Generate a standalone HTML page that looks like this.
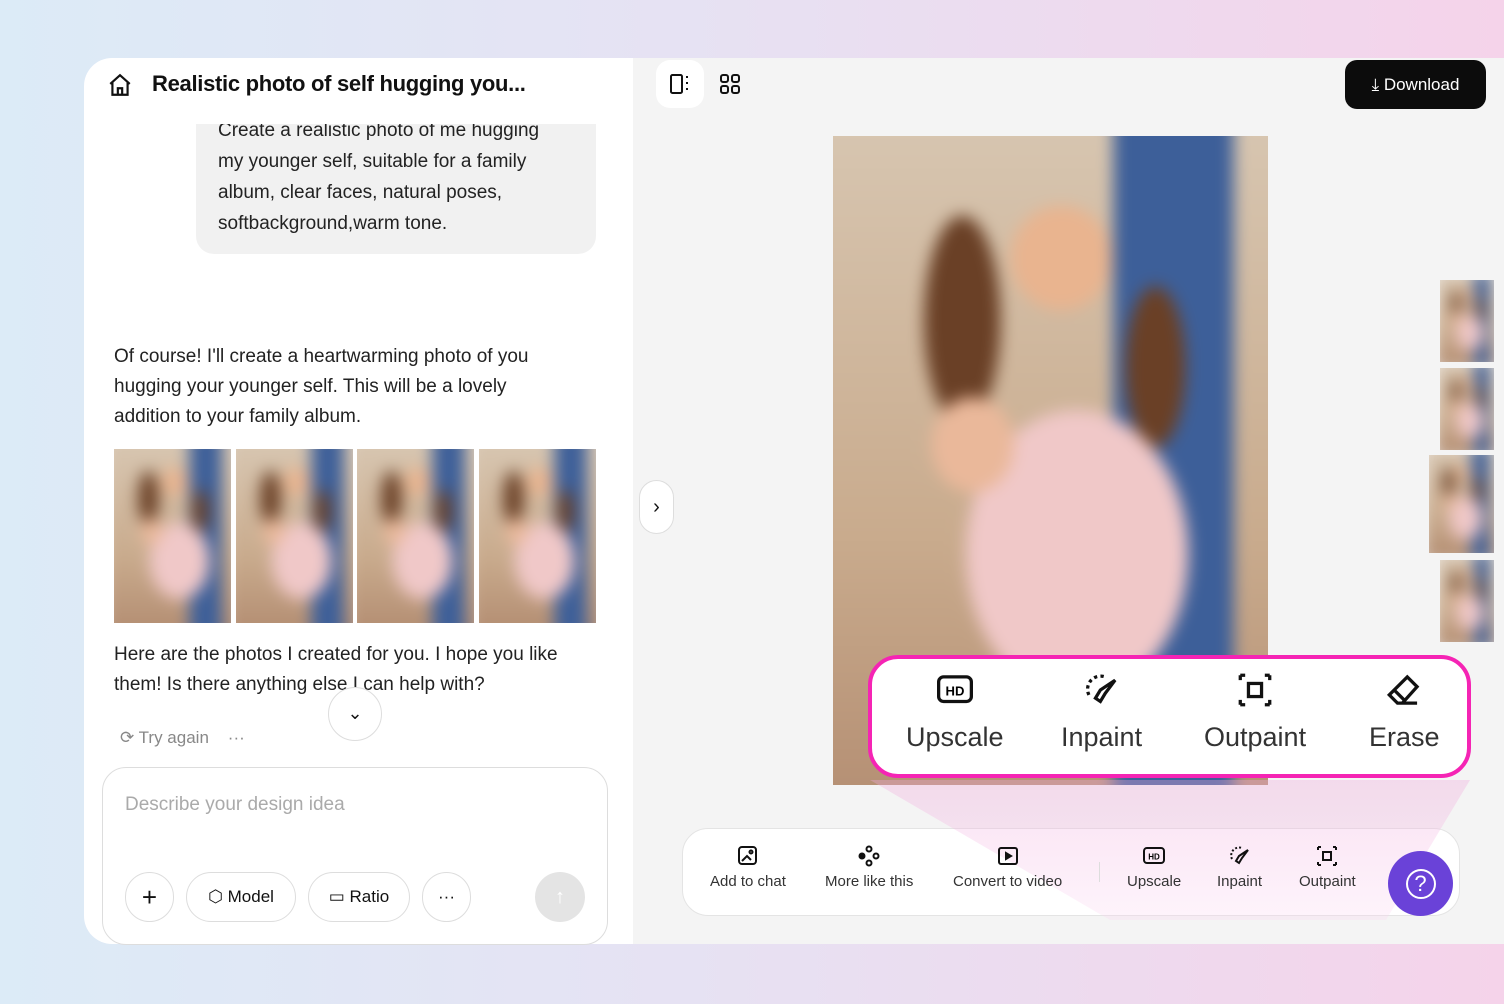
<!DOCTYPE html>
<html><head><meta charset="utf-8"><style>
*{margin:0;padding:0;box-sizing:border-box}
body{width:1504px;height:1004px;overflow:hidden;font-family:"Liberation Sans",sans-serif;background:linear-gradient(90deg,#dcebf7 0%,#e6e2f3 45%,#f5d3ea 100%);position:relative;color:#111}
.abs{position:absolute}
.left{left:84px;top:58px;width:549px;height:886px;background:#fff;border-radius:28px 0 0 28px}
.right{left:633px;top:58px;width:871px;height:886px;background:#f4f4f4}
.photo{overflow:hidden}
.photo::before{content:"";position:absolute;inset:-10%;filter:blur(8px);background:
radial-gradient(ellipse 16% 11% at 52% 24%,#e9b48f 0 60%,transparent 62%),
radial-gradient(ellipse 13% 10% at 35% 48%,#eab89a 0 60%,transparent 62%),
radial-gradient(ellipse 30% 26% at 55% 62%,#f0c8c8 0 70%,transparent 72%),
radial-gradient(ellipse 12% 22% at 33% 32%,#6a4026 0 60%,transparent 62%),
radial-gradient(ellipse 10% 18% at 70% 38%,#6a4026 0 55%,transparent 60%),
linear-gradient(90deg,transparent 62%,#3d5f99 62%,#3d5f99 85%,transparent 85%),
linear-gradient(180deg,#d9c9b5,#c9ab8d 60%,#b18a6f)}
.thumb{position:absolute;top:449px;width:117px;height:174px}
.txt{font-size:19px;line-height:30px;color:#222}
.btn{position:absolute;top:872px;height:50px;border:1px solid #ddd;border-radius:25px;background:#fff;display:flex;align-items:center;justify-content:center;font-size:17px;gap:6px}
.tb{position:absolute;top:845px;text-align:center;font-size:15px;color:#333}
.tb svg{display:block;margin:0 auto 6px}
.big{position:absolute;top:672px;text-align:center;font-size:27px;color:#333}
.big svg{display:block;margin:0 auto 14px}
</style></head><body>
<div class="abs left"></div>
<div class="abs right"></div>
<svg class="abs" style="left:107px;top:72px" width="26" height="26" viewBox="0 0 24 24" fill="none" stroke="#111" stroke-width="2"><path d="M3 11L12 3l9 8M5 9v12h14V9M10 21v-6h4v6"/></svg>
<div class="abs" style="left:152px;top:71px;font-size:22px;font-weight:bold;letter-spacing:-0.3px">Realistic photo of self hugging you...</div>
<div class="abs" style="left:196px;top:124px;width:400px;height:130px;background:#f1f1f1;border-radius:0 0 18px 18px"></div>
<div class="abs txt" style="left:218px;top:124px;font-size:19px;line-height:31px;overflow:hidden;height:116px"><div style="margin-top:-9px">Create a realistic photo of me hugging<br>my younger self, suitable for a family<br>album, clear faces, natural poses,<br>softbackground,warm tone.</div></div>
<div class="abs txt" style="left:114px;top:342px">Of course! I'll create a heartwarming photo of you<br>hugging your younger self. This will be a lovely<br>addition to your family album.</div>
<div class="abs thumb photo" style="left:114px"></div>
<div class="abs thumb photo" style="left:236px"></div>
<div class="abs thumb photo" style="left:357px"></div>
<div class="abs thumb photo" style="left:479px"></div>
<div class="abs txt" style="left:114px;top:640px">Here are the photos I created for you. I hope you like<br>them! Is there anything else I can help with?</div>
<div class="abs" style="left:328px;top:687px;width:54px;height:54px;border-radius:50%;background:#fff;border:1px solid #ddd;text-align:center;line-height:50px;font-size:18px">⌄</div>
<div class="abs" style="left:120px;top:728px;font-size:17px;color:#888">⟳ Try again &nbsp;&nbsp;&nbsp;···</div>
<div class="abs" style="left:102px;top:767px;width:506px;height:178px;border:1px solid #ddd;border-radius:24px;background:#fff"></div>
<div class="abs" style="left:125px;top:794px;font-size:19px;color:#aaa">Describe your design idea</div>
<div class="btn" style="left:125px;width:49px;font-size:26px">+</div>
<div class="btn" style="left:186px;width:110px">⬡ Model</div>
<div class="btn" style="left:308px;width:102px">▭ Ratio</div>
<div class="btn" style="left:422px;width:49px">···</div>
<div class="abs" style="left:535px;top:872px;width:50px;height:50px;border-radius:50%;background:#e4e4e4;color:#fff;text-align:center;line-height:50px;font-size:20px">↑</div>
<div class="abs" style="left:656px;top:60px;width:48px;height:48px;background:#fff;border-radius:14px"></div>
<svg class="abs" style="left:669px;top:73px" width="22" height="22" viewBox="0 0 22 22" fill="none" stroke="#111" stroke-width="2"><rect x="2" y="2" width="11" height="18" rx="1.5"/><path d="M18 3v2M18 9v2M18 15v2"/></svg>
<svg class="abs" style="left:719px;top:73px" width="22" height="22" viewBox="0 0 22 22" fill="none" stroke="#111" stroke-width="2"><rect x="2" y="2" width="7" height="7" rx="2"/><rect x="13" y="2" width="7" height="7" rx="2"/><rect x="2" y="13" width="7" height="7" rx="2"/><rect x="13" y="13" width="7" height="7" rx="2"/></svg>
<div class="abs" style="left:1345px;top:60px;width:141px;height:49px;background:#0c0c0c;border-radius:12px;color:#fff;font-size:17px;line-height:49px;text-align:center">⤓ Download</div>
<div class="abs" style="left:639px;top:480px;width:35px;height:54px;background:#fff;border:1px solid #ddd;border-radius:18px;text-align:center;line-height:52px;font-size:20px">›</div>
<div class="abs photo" style="left:833px;top:136px;width:435px;height:649px"></div>
<div class="abs photo" style="left:1440px;top:280px;width:54px;height:82px"></div>
<div class="abs photo" style="left:1440px;top:368px;width:54px;height:82px"></div>
<div class="abs photo" style="left:1429px;top:455px;width:65px;height:98px"></div>
<div class="abs photo" style="left:1440px;top:560px;width:54px;height:82px"></div>
<div class="abs" style="left:682px;top:828px;width:778px;height:88px;background:#fff;border:1px solid #e4e4e4;border-radius:26px"></div>
<div class="abs" style="left:870px;top:780px;width:600px;height:140px;background:linear-gradient(180deg,rgba(240,170,220,.35),rgba(250,210,240,.25));clip-path:polygon(0 0,100% 0,86% 100%,40% 100%)"></div>
<div class="tb" style="left:710px"><svg width="22" height="22" viewBox="0 0 22 22" fill="none" stroke="#111" stroke-width="2"><rect x="2" y="2" width="17" height="17" rx="3"/><path d="M5 16l5-5 4 4"/><circle cx="14" cy="7" r="1.5"/></svg>Add to chat</div>
<div class="tb" style="left:825px"><svg width="22" height="22" viewBox="0 0 22 22" fill="none" stroke="#111" stroke-width="2"><circle cx="11" cy="4" r="2.5"/><circle cx="4" cy="11" r="2.5" fill="#111"/><circle cx="18" cy="11" r="2.5"/><circle cx="11" cy="18" r="2.5"/></svg>More like this</div>
<div class="tb" style="left:953px"><svg width="22" height="22" viewBox="0 0 22 22" fill="none" stroke="#111" stroke-width="2"><rect x="2" y="3" width="18" height="16" rx="2"/><path d="M9 8v6l5-3z" fill="#111"/></svg>Convert to video</div>
<div class="abs" style="left:1099px;top:862px;width:1px;height:20px;background:#ddd"></div>
<div class="tb" style="left:1127px"><svg width="24" height="22" viewBox="0 0 24 22"><rect x="2" y="3" width="20" height="15" rx="3" fill="none" stroke="#111" stroke-width="2"/><text x="12" y="14.5" font-size="8" font-weight="bold" text-anchor="middle" font-family="Liberation Sans">HD</text></svg>Upscale</div>
<div class="tb" style="left:1217px"><svg width="24" height="22" viewBox="0 0 24 22" fill="none" stroke="#111" stroke-width="2"><path d="M4 14a8 8 0 0 1 10-11" stroke-dasharray="2 2"/><path d="M20 5l-6 8-3 5-3-2 3-5z"/></svg>Inpaint</div>
<div class="tb" style="left:1299px"><svg width="24" height="22" viewBox="0 0 24 22" fill="none" stroke="#111" stroke-width="2"><rect x="8" y="7" width="8" height="8"/><path d="M3 2h3M3 2v3M21 2h-3M21 2v3M3 20h3M3 20v-3M21 20h-3M21 20v-3"/></svg>Outpaint</div>
<div class="abs" style="left:1388px;top:851px;width:65px;height:65px;border-radius:50%;background:#6a42d8;color:#fff;text-align:center;line-height:63px;font-size:30px"><span style="display:inline-block;width:30px;height:30px;border:2.5px solid #fff;border-radius:50%;line-height:25px;font-size:22px;vertical-align:middle">?</span></div>
<div class="abs" style="left:868px;top:655px;width:603px;height:123px;background:#fff;border:4px solid #f524b4;border-radius:30px"></div>
<div class="big" style="left:906px"><svg width="42" height="36" viewBox="0 0 24 22"><rect x="2" y="3" width="20" height="15" rx="3" fill="none" stroke="#111" stroke-width="2"/><text x="12" y="14.5" font-size="8" font-weight="bold" text-anchor="middle" font-family="Liberation Sans">HD</text></svg>Upscale</div>
<div class="big" style="left:1061px"><svg width="44" height="36" viewBox="0 0 24 22" fill="none" stroke="#111" stroke-width="2"><path d="M4 14a8 8 0 0 1 10-11" stroke-dasharray="2 2"/><path d="M20 5l-6 8-3 5-3-2 3-5z"/></svg>Inpaint</div>
<div class="big" style="left:1204px"><svg width="44" height="36" viewBox="0 0 24 22" fill="none" stroke="#111" stroke-width="2"><rect x="8" y="7" width="8" height="8"/><path d="M3 2h3M3 2v3M21 2h-3M21 2v3M3 20h3M3 20v-3M21 20h-3M21 20v-3"/></svg>Outpaint</div>
<div class="big" style="left:1369px"><svg width="44" height="36" viewBox="0 0 24 22" fill="none" stroke="#111" stroke-width="2"><path d="M8 19l-5-5L14 3l6 6-9 10zM6 11l6 6M11 19h9"/></svg>Erase</div>
</body></html>
